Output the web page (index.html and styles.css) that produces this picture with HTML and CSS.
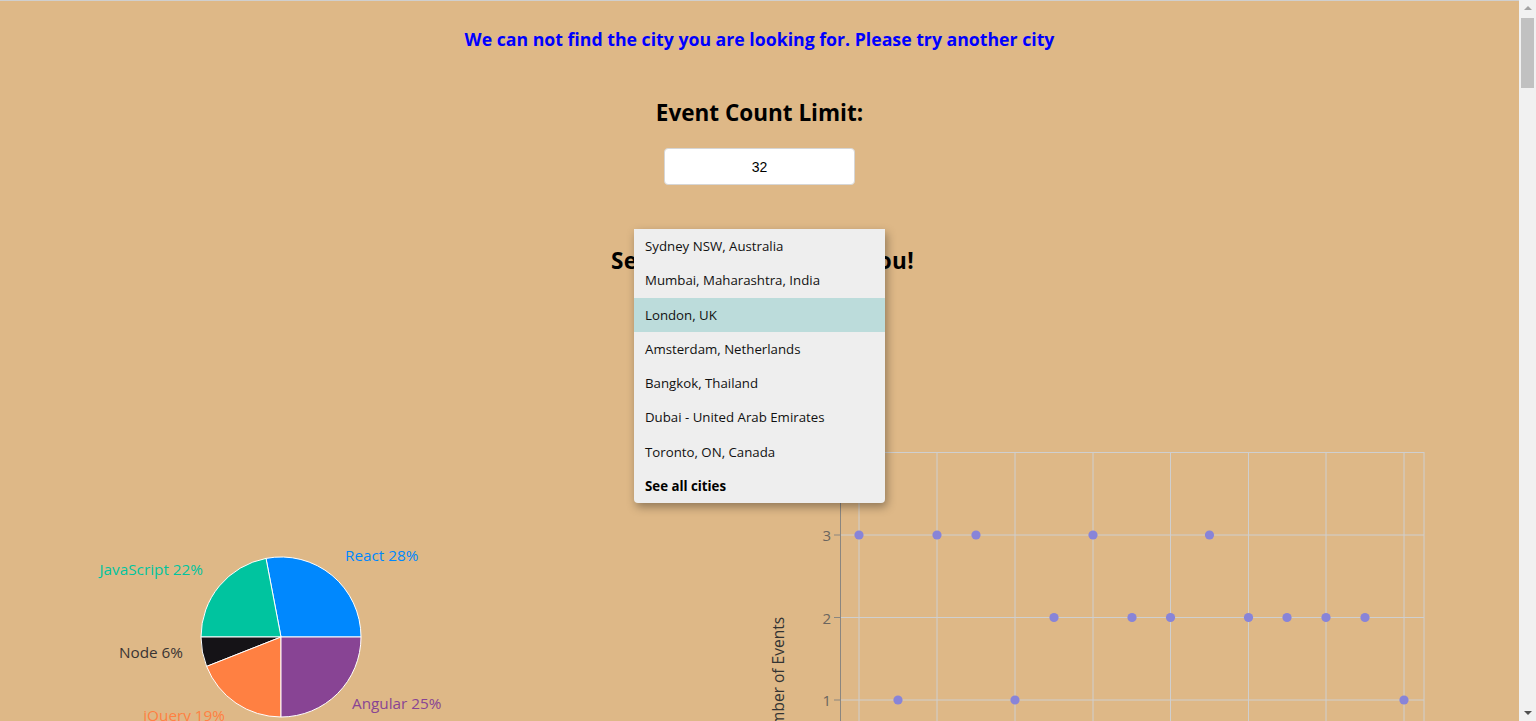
FILE: index.html
```html
<!DOCTYPE html>
<html lang="en">
<head>
<meta charset="utf-8">
<title>Meet App</title>
<link rel="stylesheet" href="styles.css">
</head>
<body class="page">
<div class="app">
  <p class="alert">We can not find the city you are looking for. Please try another city</p>

  <h2 class="section-title title-count">Event Count Limit:</h2>
  <div class="count-row">
    <input class="count-input" type="text" value="32">
  </div>

  <div class="city-search">
    <h2 class="section-title title-city">Search for a city near you!</h2>
    <ul class="suggestions">
      <li class="suggestion">Sydney NSW, Australia</li>
      <li class="suggestion">Mumbai, Maharashtra, India</li>
      <li class="suggestion is-active">London, UK</li>
      <li class="suggestion">Amsterdam, Netherlands</li>
      <li class="suggestion">Bangkok, Thailand</li>
      <li class="suggestion">Dubai - United Arab Emirates</li>
      <li class="suggestion">Toronto, ON, Canada</li>
      <li class="suggestion see-all">See all cities</li>
    </ul>
  </div>

  <div class="charts">
    <div class="chart chart-pie">
      <svg class="chart-svg" width="760" height="400" viewBox="0 0 760 400">
        <g stroke="#ffffff" stroke-width="1">
          <path d="M281,217 L361,217 A80,80 0 0,0 266.0,138.4 Z" fill="#0088FE"/>
          <path d="M281,217 L266.0,138.4 A80,80 0 0,0 201,217 Z" fill="#00C49F"/>
          <path d="M281,217 L201,217 A80,80 0 0,0 206.6,246.4 Z" fill="#151317"/>
          <path d="M281,217 L206.6,246.4 A80,80 0 0,0 281,297 Z" fill="#FF8042"/>
          <path d="M281,217 L281,297 A80,80 0 0,0 361,217 Z" fill="#884494"/>
        </g>
        <g class="pie-label">
          <text x="345" y="135" fill="#0088FE" text-anchor="start">React 28%</text>
          <text x="203" y="149" fill="#00C49F" text-anchor="end">JavaScript 22%</text>
          <text x="183" y="232" fill="#3a3433" text-anchor="end">Node 6%</text>
          <text x="225" y="295" fill="#FF8042" text-anchor="end">jQuery 19%</text>
          <text x="352" y="283" fill="#884494" text-anchor="start">Angular 25%</text>
        </g>
      </svg>
    </div>
    <div class="chart chart-scatter">
      <svg class="chart-svg" width="759" height="400" viewBox="0 0 759 400">
        <g stroke="#cfcfcf" stroke-width="1" fill="none">
          <line x1="80" y1="32.5" x2="664" y2="32.5"/>
          <line x1="80" y1="115" x2="664" y2="115"/>
          <line x1="80" y1="197.5" x2="664" y2="197.5"/>
          <line x1="80" y1="280" x2="664" y2="280"/>
          <line x1="99" y1="32" x2="99" y2="362"/>
          <line x1="177" y1="32" x2="177" y2="362"/>
          <line x1="255" y1="32" x2="255" y2="362"/>
          <line x1="333" y1="32" x2="333" y2="362"/>
          <line x1="410.5" y1="32" x2="410.5" y2="362"/>
          <line x1="488.5" y1="32" x2="488.5" y2="362"/>
          <line x1="566" y1="32" x2="566" y2="362"/>
          <line x1="644" y1="32" x2="644" y2="362"/>
          <line x1="664" y1="32" x2="664" y2="362"/>
        </g>
        <g stroke="#8a8680" stroke-width="1">
          <line x1="80.5" y1="32" x2="80.5" y2="362"/>
          <line x1="74" y1="115" x2="80" y2="115"/>
          <line x1="74" y1="197.5" x2="80" y2="197.5"/>
          <line x1="74" y1="280" x2="80" y2="280"/>
        </g>
        <g class="axis-tick">
          <text x="71" y="115" text-anchor="end">3</text>
          <text x="71" y="197.5" text-anchor="end">2</text>
          <text x="71" y="280" text-anchor="end">1</text>
        </g>
        <text class="axis-label" x="0" y="0" transform="translate(18,262) rotate(-90)" text-anchor="middle">Number of Events</text>
        <g fill="#8884d8">
          <circle cx="99" cy="115" r="4.6"/>
          <circle cx="138" cy="280" r="4.6"/>
          <circle cx="177" cy="115" r="4.6"/>
          <circle cx="216" cy="115" r="4.6"/>
          <circle cx="255" cy="280" r="4.6"/>
          <circle cx="294" cy="197.5" r="4.6"/>
          <circle cx="333" cy="115" r="4.6"/>
          <circle cx="372" cy="197.5" r="4.6"/>
          <circle cx="410.5" cy="197.5" r="4.6"/>
          <circle cx="449.5" cy="115" r="4.6"/>
          <circle cx="488.5" cy="197.5" r="4.6"/>
          <circle cx="527" cy="197.5" r="4.6"/>
          <circle cx="566" cy="197.5" r="4.6"/>
          <circle cx="605" cy="197.5" r="4.6"/>
          <circle cx="644" cy="280" r="4.6"/>
        </g>
      </svg>
    </div>
  </div>

  <div class="event-list"></div>
</div>

<div class="scrollbar" aria-hidden="true">
  <div class="scroll-arrow scroll-up"></div>
  <div class="scroll-track">
    <div class="scroll-thumb"></div>
  </div>
  <div class="scroll-arrow scroll-down"></div>
</div>
</body>
</html>
```

FILE: styles.css
```css
.page {
  margin: 0;
  background: #deb887;
  font-family: "Open Sans", "Noto Sans", sans-serif;
  color: #000;
}

.app {
  border-top: 1px solid #cfcfcf;
  margin-right: 17px;
  text-align: center;
}

.alert {
  margin: 26px 0 0;
  font-size: 17.7px;
  line-height: 24px;
  font-weight: 700;
  color: #0000ff;
}

.section-title {
  margin: 0;
  font-size: 22.5px;
  line-height: 30px;
  font-weight: 700;
}

.title-count {
  margin-top: 47px;
}

.title-city {
  letter-spacing: 0.4px;
  padding-left: 6px;
}

.count-row {
  margin-top: 20px;
  display: flex;
  justify-content: center;
}

.count-input {
  box-sizing: border-box;
  width: 191px;
  height: 37px;
  border: 1px solid #d6d6d6;
  border-radius: 4px;
  background: #fff;
  text-align: center;
  font-family: "Liberation Sans", Arial, sans-serif;
  font-size: 14px;
  color: #000;
  padding: 0;
}

.city-search {
  position: relative;
  margin-top: 61px;
}

.suggestions {
  position: absolute;
  top: -17px;
  left: 50%;
  margin: 0 0 0 -125.5px;
  width: 251px;
  padding: 0;
  list-style: none;
  text-align: left;
  background: #eeeeee;
  border-radius: 0 0 4px 4px;
  box-shadow: 2px 4px 10px rgba(0, 0, 0, 0.35);
  z-index: 2;
}

.suggestion {
  box-sizing: border-box;
  height: 34.3px;
  line-height: 35px;
  padding: 0 11px;
  font-size: 13.25px;
  color: #111;
  white-space: nowrap;
}

.suggestion.is-active {
  background: #bcdcdb;
}

.suggestion.see-all {
  font-weight: 700;
  color: #000;
}

.charts {
  display: flex;
  margin-top: 144px;
  height: 400px;
}

.chart {
  flex: none;
}

.chart-pie {
  width: 760px;
}

.chart-scatter {
  width: 759px;
}

.chart-svg {
  display: block;
}

.pie-label text {
  font-family: "Open Sans", "Noto Sans", sans-serif;
  font-size: 15.3px;
  dominant-baseline: central;
}

.axis-tick text {
  font-family: "Open Sans", "Noto Sans", sans-serif;
  font-size: 15px;
  fill: #6b655e;
  dominant-baseline: central;
}

.axis-label {
  font-family: "Open Sans", "Noto Sans", sans-serif;
  font-size: 15.5px;
  fill: #333;
  dominant-baseline: central;
}

.event-list {
  height: 6200px;
}

/* decorative page scrollbar, overlaying the right edge */
.scrollbar {
  position: fixed;
  top: 0;
  right: 0;
  bottom: 0;
  width: 17px;
  background: #f1f1f1;
  display: flex;
  flex-direction: column;
  z-index: 10;
}

.scroll-arrow {
  height: 17px;
  flex: none;
  position: relative;
}

.scroll-up::after,
.scroll-down::after {
  content: "";
  position: absolute;
  left: 5px;
  width: 0;
  height: 0;
  border-left: 4px solid transparent;
  border-right: 4px solid transparent;
}

.scroll-up::after {
  top: 6px;
  border-bottom: 4px solid #a3a3a3;
}

.scroll-down::after {
  top: 7px;
  border-top: 4px solid #505050;
}

.scroll-track {
  flex: 1;
  padding: 1px 2px;
}

.scroll-thumb {
  height: 70px;
  background: #c1c1c1;
}
```
